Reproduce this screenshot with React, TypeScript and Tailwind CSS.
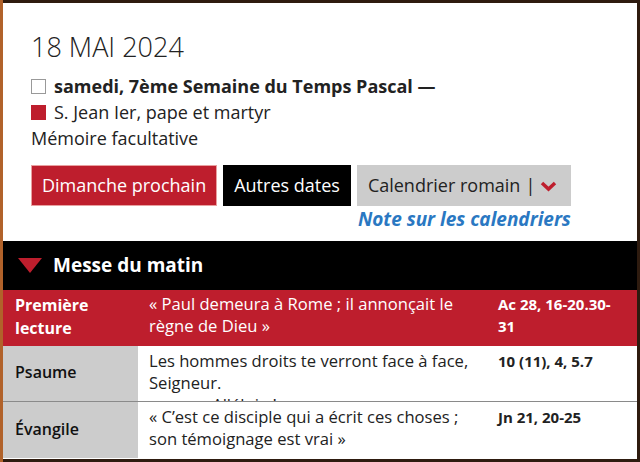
import React from 'react';

const font = { fontFamily: '"Open Sans", "Noto Sans", sans-serif' };

type Reading = {
  label: string;
  text: string[];
  ref: string;
  tone: 'red' | 'plain';
};

const readings: Reading[] = [
  {
    label: 'Première lecture',
    text: ['« Paul demeura à Rome ; il annonçait le règne de Dieu »'],
    ref: 'Ac 28, 16-20.30-31',
    tone: 'red',
  },
  {
    label: 'Psaume',
    text: ['Les hommes droits te verront face à face, Seigneur.', 'ou : Alléluia !'],
    ref: '10 (11), 4, 5.7',
    tone: 'plain',
  },
  {
    label: 'Évangile',
    text: ['« C’est ce disciple qui a écrit ces choses ; son témoignage est vrai »'],
    ref: 'Jn 21, 20-25',
    tone: 'plain',
  },
];

const ReadingRow: React.FC<{ r: Reading; last?: boolean }> = ({ r, last }) => {
  const red = r.tone === 'red';
  return (
    <div
      className={`flex h-[56px] overflow-hidden ${
        red ? 'bg-[#be1e2d] text-white' : last ? 'bg-white text-[#222]' : 'bg-white text-[#222] border-b border-[#8a8a8a]'
      }`}
    >
      <div
        className={`w-[135px] shrink-0 pl-3 pr-2 flex items-center text-[16px] leading-[23px] ${
          red ? 'font-bold text-white pb-[3px]' : 'bg-[#cccccc] font-semibold text-[#111] pb-[2px]'
        }`}
      >
        {r.label}
      </div>
      <div
        className={`w-[352px] shrink-0 pl-[11px] pr-3 text-[16.6px] leading-[22px] ${red ? 'pt-[3px]' : 'pt-[4px]'}`}
      >
        {r.text.map((t, i) => (
          <p key={i} className={i > 0 ? 'pl-[30px]' : ''}>
            {t}
          </p>
        ))}
      </div>
      <div className={`flex-1 pl-[8px] pr-3 text-[15px] leading-[22px] font-bold ${red ? 'pt-[3px]' : 'pt-[4px]'}`}>
        {r.ref}
      </div>
    </div>
  );
};

export default function App() {
  return (
    <div
      className="w-[640px] h-[462px] overflow-hidden bg-[#2e1b0f] pt-[3px] pr-[3px] pb-[3px] border-l-[3px] border-l-[#b1622a]"
      style={font}
    >
      <div className="bg-white h-full flex flex-col">
        <div className="pl-[28px] pt-[27px] pb-[11px]">
          <h1 className="text-[27px] leading-[34px] font-light text-[#222]">18 MAI 2024</h1>
          <div className="mt-[10px] flex items-center gap-[8px] text-[18px] leading-[25px] font-bold text-[#222]">
            <span className="w-[15px] h-[15px] border border-[#999] bg-white"></span>
            <span>samedi, 7ème Semaine du Temps Pascal —</span>
          </div>
          <div className="flex items-center gap-[8px] text-[18px] leading-[26px] text-[#222]">
            <span className="w-[15px] h-[15px] bg-[#be1e2d]"></span>
            <span>S. Jean Ier, pape et martyr</span>
          </div>
          <div className="text-[18px] leading-[26px] text-[#222]">Mémoire facultative</div>
          <div className="mt-[14px] flex gap-[6px]">
            <button className="h-[41px] px-[10px] bg-[#be1e2d] text-white text-[18px] border border-[#e8a0a0]">
              Dimanche prochain
            </button>
            <button className="h-[41px] px-[11px] bg-black text-white text-[18px]">Autres dates</button>
            <div className="flex flex-col">
              <button className="h-[41px] pl-[11px] pr-[11px] bg-[#cccccc] text-[#222] text-[18px] flex items-center">
                Calendrier romain <span className="ml-[5px] mr-[5px] text-[#222]">|</span>
                <svg width="17" height="12" viewBox="0 0 17 12">
                  <path d="M2 3 L8.5 9 L15 3" fill="none" stroke="#be1e2d" strokeWidth="3.5" />
                </svg>
              </button>
              <a className="mt-[2px] pl-[1px] text-[19px] leading-[22px] font-bold italic text-[#2a78c2]">
                Note sur les calendriers
              </a>
            </div>
          </div>
        </div>
        <div className="h-[49px] bg-black flex items-center pl-[15px] gap-[11px]">
          <svg width="24" height="15" viewBox="0 0 24 15">
            <path d="M0 0 L24 0 L12 15 Z" fill="#be1e2d" />
          </svg>
          <span className="text-white text-[19px] font-bold">Messe du matin</span>
        </div>
        {readings.map((r, i) => (
          <ReadingRow key={r.label} r={r} last={i === readings.length - 1} />
        ))}
      </div>
    </div>
  );
}
